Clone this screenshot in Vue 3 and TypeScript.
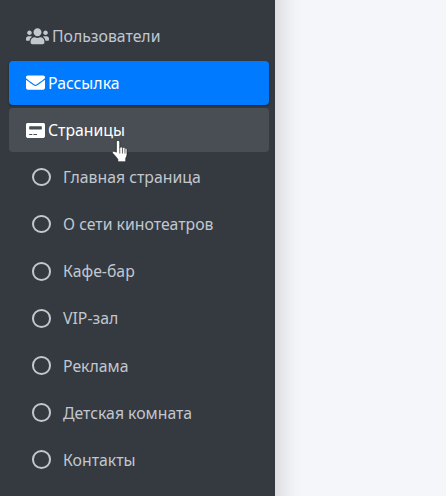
<template>
  <div class="page">
    <aside class="sidebar">
      <nav class="menu">
        <a class="link">
          <svg class="icon users" viewBox="0 0 640 512"><path d="M96 224c35.300 0 64-28.700 64-64s-28.700-64-64-64-64 28.700-64 64 28.700 64 64 64zm448 0c35.300 0 64-28.700 64-64s-28.700-64-64-64-64 28.700-64 64 28.700 64 64 64zm32 32h-64c-17.600 0-33.500 7.100-45.100 18.600 40.300 22.100 68.900 62 75.100 109.400h66c17.700 0 32-14.300 32-32v-32c0-35.300-28.700-64-64-64zm-256 0c61.900 0 112-50.100 112-112S381.900 32 320 32 208 82.100 208 144s50.100 112 112 112zm76.800 32h-8.300c-20.800 10-43.900 16-68.500 16s-47.600-6-68.500-16h-8.300C179.600 288 128 339.600 128 403.200V432c0 26.500 21.500 48 48 48h288c26.500 0 48-21.500 48-48v-28.800c0-63.600-51.600-115.200-115.200-115.200zm-223.700-13.400C161.500 263.100 145.600 256 128 256H64c-35.300 0-64 28.700-64 64v32c0 17.700 14.300 32 32 32h65.900c6.300-47.400 34.900-87.300 75.200-109.400z" /></svg>
          <span>Пользователи</span>
        </a>
        <a class="link active">
          <svg class="icon" viewBox="0 0 512 512"><path d="M502.300 190.800c3.900-3.100 9.700-.2 9.700 4.700V400c0 26.500-21.500 48-48 48H48c-26.500 0-48-21.500-48-48V195.600c0-5 5.700-7.800 9.700-4.700 22.400 17.400 52.100 39.500 154.100 113.600 21.100 15.400 56.700 47.800 92.200 47.600 35.700.3 72-32.800 92.300-47.600 102-74.100 131.600-96.300 154-113.700zM256 320c23.200.4 56.600-29.200 73.400-41.400 132.700-96.300 142.800-104.700 173.400-128.700 5.800-4.500 9.200-11.500 9.200-18.900v-19c0-26.500-21.500-48-48-48H48C21.500 64 0 85.500 0 112v19c0 7.400 3.400 14.300 9.200 18.900 30.600 23.900 40.700 32.400 173.400 128.700 16.800 12.200 50.200 41.800 73.400 41.400z" /></svg>
          <span>Рассылка</span>
        </a>
        <a class="link hover">
          <svg class="icon" viewBox="0 0 576 512"><path d="M528 32H48C21.500 32 0 53.500 0 80v352c0 26.500 21.500 48 48 48h480c26.500 0 48-21.500 48-48V80c0-26.500-21.500-48-48-48zM96 144c0-8.800 7.200-16 16-16h352c8.800 0 16 7.200 16 16v64c0 8.800-7.200 16-16 16H112c-8.800 0-16-7.200-16-16v-64zm96 240c0 4.400-3.600 8-8 8H104c-4.400 0-8-3.600-8-8v-16c0-4.400 3.600-8 8-8h80c4.400 0 8 3.600 8 8v16zm144 0c0 4.400-3.600 8-8 8H232c-4.400 0-8-3.600-8-8v-16c0-4.400 3.600-8 8-8h96c4.400 0 8 3.600 8 8v16z" /></svg>
          <span>Страницы</span>
          <svg class="cursor" viewBox="0 0 16 23">
            <path d="M4.500 2.200c0-2.400 3.500-2.400 3.500 0V8c.6-1.400 2.500-1.300 2.800.2.600-1 2.400-.8 2.600.6.800-.6 2.100-.2 2.100 1.200v5c0 1.600-.7 2.700-1.300 3.800v3.700H6v-2.600C4.200 17.500 2.800 15.600.9 13.900-.6 12.300 1.500 10.300 4.500 12.600z" fill="#fff" stroke="#1a1a1a" stroke-width=".7" stroke-linejoin="round" />
            <path d="M8 8v6M10.800 8.400v5.600M13.400 9v5" stroke="#1a1a1a" stroke-width=".7" fill="none" />
          </svg>
        </a>
        <a v-for="item in pages" :key="item" class="link sub">
          <span class="ring" />
          <span>{{ item }}</span>
        </a>
      </nav>
    </aside>
    <main class="content" />
  </div>
</template>

<script setup lang="ts">
const pages: string[] = [
  'Главная страница',
  'О сети кинотеатров',
  'Кафе-бар',
  'VIP-зал',
  'Реклама',
  'Детская комната',
  'Контакты',
]
</script>

<style>
body {
  margin: 0;
  overflow: hidden;
}
</style>

<style scoped>
.page {
  display: flex;
  height: 496px;
  width: 446px;
  overflow: hidden;
  background: #f4f6f9;
  font-family: "Noto Sans", "Open Sans", sans-serif;
}

.sidebar {
  width: 275px;
  flex: none;
  background: #343a40;
}

.menu {
  display: flex;
  flex-direction: column;
  gap: 3px;
  padding: 13.800px 6px 0 9px;
}

.link {
  position: relative;
  display: flex;
  align-items: center;
  height: 44.100px;
  box-sizing: border-box;
  padding-left: 17px;
  border-radius: 4px;
  color: #c2c7d0;
  font-size: 15.800px;
}

.icon {
  width: 19px;
  height: 19px;
  margin-right: 3px;
  fill: currentColor;
  flex: none;
}
.users {
  width: 23px;
  height: 18.400px;
}

.active {
  background: #007bff;
  color: #fff;
  box-shadow: 0 1px 3px rgba(0, 0, 0, 0.12), 0 1px 2px rgba(0, 0, 0, 0.24);
}
.hover {
  background: rgba(255, 255, 255, 0.1);
  color: #fff;
}

.sub {
  padding-left: 23px;
}
.ring {
  width: 19px;
  height: 18.500px;
  box-sizing: border-box;
  border: 2.800px solid #c2c7d0;
  border-radius: 50%;
  margin-right: 12px;
  flex: none;
}

.cursor {
  position: absolute;
  left: 103px;
  top: 32px;
  width: 15.500px;
  height: 22.300px;
}

/* shadow the sidebar casts on the page */
.content {
  flex: 1;
  background: linear-gradient(to right, #dcdde0, #e4e5e8 6px, #ecedf0 13px, #f2f4f7 21px, #f4f6f9 28px);
}
</style>
